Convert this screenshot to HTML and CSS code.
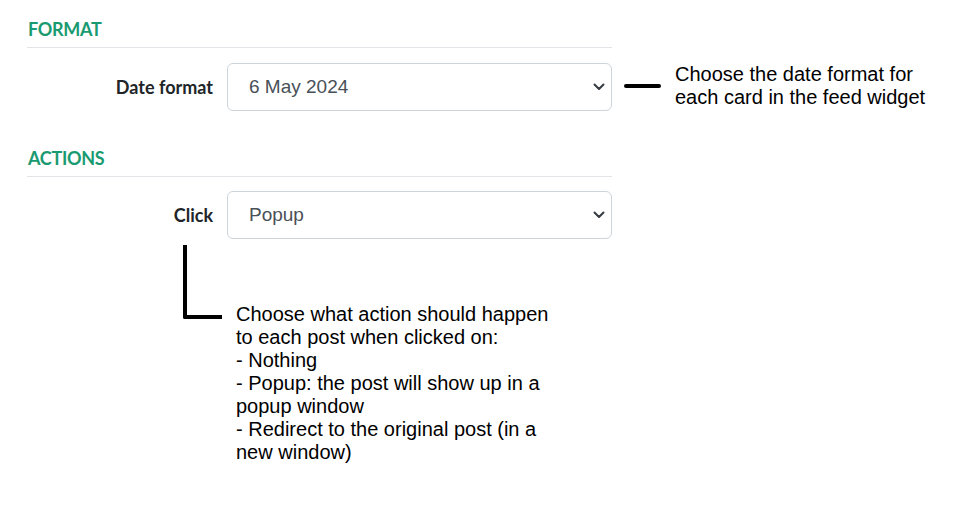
FILE: index.html
```html
<!DOCTYPE html>
<html>
<head>
<meta charset="utf-8">
<link rel="stylesheet" href="styles.css">
</head>
<body>
<div class="page">
  <div class="form">
    <h2 class="section-title">FORMAT</h2>
    <div class="row">
      <label class="label">Date format</label>
      <div class="select"><span class="value">6 May 2024</span>
        <svg class="chev" width="12" height="8" viewBox="0 0 12 8"><path d="M1.5 1.5 L6 6 L10.5 1.5" fill="none" stroke="#343a40" stroke-width="2" stroke-linecap="round" stroke-linejoin="round"/></svg>
      </div>
    </div>
    <h2 class="section-title second">ACTIONS</h2>
    <div class="row row-second">
      <label class="label">Click</label>
      <div class="select"><span class="value">Popup</span>
        <svg class="chev" width="12" height="8" viewBox="0 0 12 8"><path d="M1.5 1.5 L6 6 L10.5 1.5" fill="none" stroke="#343a40" stroke-width="2" stroke-linecap="round" stroke-linejoin="round"/></svg>
      </div>
    </div>
  </div>

  <div class="note note-date">
    <span class="dash"></span>
    <p class="note-text">Choose the date format for<br>each card in the feed widget</p>
  </div>

  <div class="note note-click">
    <span class="elbow"></span>
    <p class="note-text">Choose what action should happen<br>to each post when clicked on:<br>- Nothing<br>- Popup: the post will show up in a<br>popup window<br>- Redirect to the original post (in a<br>new window)</p>
  </div>
</div>
</body>
</html>
```
FILE: styles.css
```css
html, body {
  margin: 0;
  padding: 0;
  background: #ffffff;
}
.page {
  position: relative;
  width: 978px;
  height: 517px;
  overflow: hidden;
}
.form {
  width: 585px;
  padding: 19px 0 0 27px;
  font-family: Lato, "Noto Sans", sans-serif;
}
.section-title {
  margin: 0;
  padding: 0 0 8px 1px;
  font-size: 18px;
  line-height: 20px;
  font-weight: 700;
  color: #1a9a70;
  border-bottom: 1px solid #e3e3e8;
  letter-spacing: -0.3px;
}
.section-title.second {
  margin-top: 37px;
}
.row {
  display: flex;
  align-items: center;
  gap: 14px;
  margin-top: 15px;
}
.row.row-second {
  margin-top: 14px;
}
.label {
  width: 186px;
  text-align: right;
  font-size: 18px;
  font-weight: 700;
  color: #212529;
}
.select {
  flex: 1;
  height: 46px;
  border: 1px solid #ced4da;
  border-radius: 6px;
  display: flex;
  align-items: center;
  justify-content: space-between;
  padding: 0 6px 0 21px;
  font-family: "Liberation Sans", Arial, sans-serif;
  font-size: 19px;
  color: #495057;
}
.chev {
  display: block;
}
.note {
  position: absolute;
  font-family: "Liberation Sans", Arial, sans-serif;
  font-size: 20px;
  line-height: 23px;
  color: #000;
}
.note-text {
  margin: 0;
}
.note-date {
  left: 624px;
  top: 63px;
  display: flex;
  align-items: center;
  gap: 14px;
}
.dash {
  display: block;
  width: 37px;
  height: 4px;
  border-radius: 2px;
  background: #000;
}
.note-click {
  left: 183px;
  top: 245px;
}
.elbow {
  position: absolute;
  left: 0;
  top: 0;
  width: 35px;
  height: 70px;
  border-left: 4px solid #000;
  border-bottom: 4px solid #000;
  border-bottom-left-radius: 2px;
}
.note-click .note-text {
  position: absolute;
  left: 53px;
  top: 58px;
  white-space: nowrap;
}
```
